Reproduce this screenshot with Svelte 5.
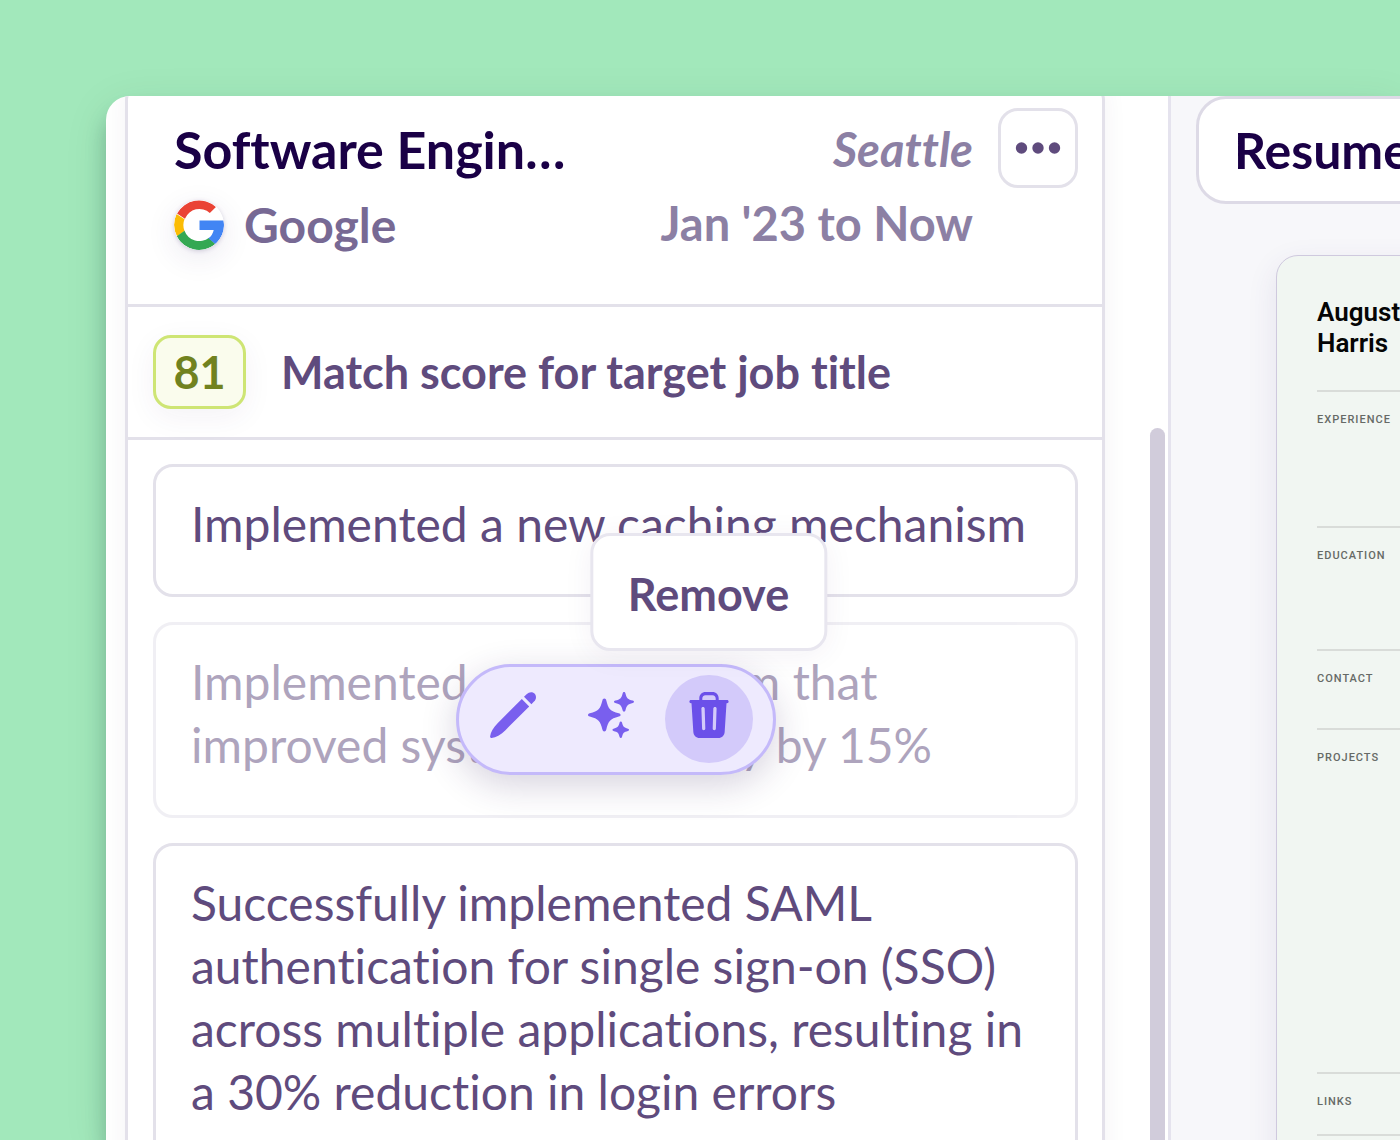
<script>
  const job = {
    title: "Software Engin…",
    company: "Google",
    location: "Seattle",
    dates: "Jan '23 to Now",
    score: 81,
  };

  const bullets = [
    { text: "Implemented a new caching mechanism" },
    {
      text: "Implemented new algorithm that improved system efficiency by 15%",
      selected: true,
    },
    {
      text: "Successfully implemented SAML authentication for single sign-on (SSO) across multiple applications, resulting in a 30% reduction in login errors",
    },
  ];

  const sections = [
    { name: "Experience", height: 136 },
    { name: "Education", height: 123 },
    { name: "Contact", height: 79 },
    { name: "Projects", height: 344 },
    { name: "Links", height: 64 },
  ];
</script>

<div class="page">
  <main class="window">
    <section class="editor">
      <article class="job">
        <header class="job-header">
          <div class="role">
            <h1>{job.title}</h1>
            <div class="company">
              <svg class="logo" viewBox="-24.5 -24.5 49 49" aria-hidden="true">
                <circle r="24.5" fill="#fff" />
                <path
                  fill="#ea4335"
                  d="M-21.5-11.2A24.5 24.5 0 0 1 16.6-17.6L10.6-11.8A15.3 15.3 0 0 0-13.8-6.2Z" />
                <path
                  fill="#fbbc05"
                  d="M-22-10.8A24.5 24.5 0 0 0-21.5 11L-14.2 5.8A15.3 15.3 0 0 1-14.2-5.6Z" />
                <path
                  fill="#34a853"
                  d="M-21.8 11A24.5 24.5 0 0 0 16 18.6L9.8 12.4A15.3 15.3 0 0 1-14.2 5.6Z" />
                <path
                  fill="#4285f4"
                  d="M.5-4.5H24.1A24.5 24.5 0 0 1 16 18.6L9.2 13A13 13 0 0 0 14.4 4.8H.5Z" />
              </svg>
              <span>{job.company}</span>
            </div>
          </div>
          <div class="meta">
            <em>{job.location}</em>
            <span>{job.dates}</span>
          </div>
          <button class="more" aria-label="More options">
            <svg width="46" height="12" viewBox="0 0 46 12">
              <circle cx="6.5" cy="6" r="5.7" />
              <circle cx="23" cy="6" r="5.7" />
              <circle cx="39.5" cy="6" r="5.7" />
            </svg>
          </button>
        </header>

        <div class="score">
          <span class="badge">{job.score}</span>
          <span>Match score for target job title</span>
        </div>

        <ul class="bullets">
          {#each bullets as bullet}
            <li>
              <p class="bullet" class:faded={bullet.selected}>{bullet.text}</p>
              {#if bullet.selected}
                <div class="toolbar">
                  <button class="tool" aria-label="Edit">
                    <svg width="46" height="46" viewBox="0 0 46 46">
                      <path
                        d="M31.8 7L39.2 14.4L15.2 38.4C10.6 43 6 45.4 1.6 46C.5 46.1 0 45.5.1 44.6C.7 40 3 35.8 7.6 31.2Z" />
                      <path
                        d="M34 4.8L36.6 2.2C39.2-.4 42.4-.5 44.5 1.6C46.6 3.7 46.5 7 44 9.6L41.4 12.2Z" />
                    </svg>
                  </button>
                  <button class="tool" aria-label="Rewrite">
                    <svg width="46" height="46" viewBox="0 0 46 46">
                      <path
                        d="M16.3 6.5C17.4 6.5 18 7.2 18.3 8.4C20.4 16.8 22 18.9 30.8 21.3C32 21.6 32.6 22.2 32.6 23C32.6 23.8 32 24.3 30.8 24.6C22 27 20.4 29.1 18.3 37.5C18 38.7 17.4 39.4 16.3 39.4C15.2 39.4 14.7 38.7 14.4 37.5C12.3 29.1 10.6 27 1.8 24.6C.6 24.3 0 23.8 0 23C0 22.2.6 21.6 1.8 21.3C10.6 18.9 12.3 16.8 14.4 8.4C14.7 7.2 15.2 6.5 16.3 6.5Z" />
                      <path
                        d="M36 0C36.7 0 37.2.5 37.4 1.2C38.7 6.3 39.8 7.4 44.8 8.6C45.6 8.8 46 9.2 46 9.8C46 10.4 45.6 10.8 44.8 11C39.8 12.2 38.7 13.4 37.4 18.4C37.2 19.2 36.7 19.6 36 19.6C35.4 19.6 34.9 19.2 34.7 18.4C33.4 13.4 32.3 12.2 27.3 11C26.5 10.8 26 10.4 26 9.8C26 9.2 26.5 8.8 27.3 8.6C32.3 7.4 33.4 6.3 34.7 1.2C34.9.5 35.4 0 36 0Z" />
                      <path
                        d="M32.8 29.5C33.4 29.5 33.8 29.9 34 30.5C35 34.7 35.9 35.6 40 36.7C40.7 36.9 41.1 37.2 41.1 37.8C41.1 38.4 40.7 38.7 40 38.9C35.9 39.9 35 40.8 34 45C33.8 45.6 33.4 46 32.8 46C32.2 46 31.8 45.6 31.6 45C30.6 40.8 29.7 39.9 25.5 38.9C24.8 38.7 24.4 38.4 24.4 37.8C24.4 37.2 24.8 36.9 25.5 36.7C29.7 35.6 30.6 34.7 31.6 30.5C31.8 29.9 32.2 29.5 32.8 29.5Z" />
                    </svg>
                  </button>
                  <button class="tool active" aria-describedby="remove-tip" aria-label="Remove">
                    <svg width="46" height="46" viewBox="0 0 46 46">
                      <path
                        fill-rule="evenodd"
                        d="M13.3 8V6.2C13.3 2.7 16 0 19.5 0H26.5C30 0 32.7 2.7 32.7 6.2V8H41C42 8 42.6 8.6 42.6 9.6C42.6 10.5 42 11.2 41 11.2H40.5L38.7 39.5C38.5 43.4 36.1 46 32.2 46H13.8C9.9 46 7.5 43.4 7.3 39.5L5.5 11.2H5C4 11.2 3.4 10.5 3.4 9.6C3.4 8.6 4 8 5 8ZM16.3 8H29.7V6.4C29.7 4.5 28.5 3.2 26.5 3.2H19.5C17.5 3.2 16.3 4.5 16.3 6.4ZM17 15C16 15 15.3 15.7 15.4 16.7L16.1 36.5C16.1 37.5 16.8 38.2 17.7 38.2C18.7 38.2 19.3 37.5 19.3 36.5L18.7 16.7C18.7 15.7 18 15 17 15ZM29 15C28 15 27.3 15.7 27.3 16.7L26.7 36.5C26.7 37.5 27.3 38.2 28.3 38.2C29.2 38.2 29.9 37.5 29.9 36.5L30.6 16.7C30.7 15.7 30 15 29 15Z" />
                    </svg>
                    <span class="tooltip" id="remove-tip" role="tooltip">Remove</span>
                  </button>
                </div>
              {/if}
            </li>
          {/each}
        </ul>
      </article>
      <div class="scrollbar"></div>
    </section>

    <aside class="preview">
      <button class="template">Resume</button>
      <div class="paper">
        <h2>August Harris</h2>
        {#each sections as section}
          <section class="block" style="height: {section.height}px">
            <h3>{section.name}</h3>
          </section>
        {/each}
      </div>
    </aside>
  </main>
</div>

<style>
  :global(body) {
    margin: 0;
    background: #a2e8bb;
  }
  .page {
    --ink: #5f4b7d;
    --title: #1a0046;
    --line: #e3e1ea;
    box-sizing: border-box;
    height: 100vh;
    padding: 96px 0 0 106px;
    overflow: hidden;
    font-family: Lato, sans-serif;
    font-variant-ligatures: none;
    color: var(--ink);
  }
  h1,
  h2,
  h3,
  p,
  ul {
    margin: 0;
    padding: 0;
  }
  button {
    box-sizing: border-box;
    padding: 0;
    font: inherit;
    color: inherit;
    cursor: pointer;
  }
  .window {
    display: grid;
    grid-template-columns: minmax(0, 1062fr) minmax(0, 232fr);
    height: 100%;
    border-radius: 24px 0 0 0;
    background: #fff;
    box-shadow: 0 18px 20px rgba(20, 60, 50, 0.26), 0 10px 44px rgba(20, 60, 50, 0.1);
  }
  .editor {
    display: flex;
    min-height: 0;
    padding: 0 3px 0 19px;
    overflow: hidden;
    border-radius: 24px 0 0 0;
  }
  .job {
    flex: 1;
    align-self: flex-start;
    min-width: 0;
    margin: -12px 45px 0 0;
    border: 3px solid var(--line);
    border-radius: 16px;
    background: #fff;
    box-shadow: 0 0 24px rgba(60, 50, 90, 0.06);
  }
  .job-header {
    display: flex;
    height: 196px;
    padding: 21px 24px 0 46px;
    border-bottom: 3px solid var(--line);
  }
  .role {
    flex: 1;
    padding-top: 4px;
  }
  h1 {
    font-size: 52px;
    font-weight: 700;
    line-height: 75px;
    color: var(--title);
    white-space: nowrap;
  }
  .company {
    display: flex;
    align-items: center;
    gap: 20px;
    font-size: 48px;
    font-weight: 700;
    line-height: 75px;
    color: #776994;
  }
  .logo {
    width: 50px;
    height: 50px;
    border-radius: 50%;
    box-shadow: 0 8px 30px rgba(60, 40, 110, 0.1), 0 1px 4px rgba(60, 40, 110, 0.2);
  }
  .meta {
    display: flex;
    flex-direction: column;
    align-items: flex-end;
    padding: 4px 25px 0 0;
    font-size: 47px;
    font-weight: 700;
    line-height: 74px;
    color: #8c80a4;
  }
  .more {
    display: flex;
    align-items: center;
    justify-content: center;
    width: 80px;
    height: 80px;
    border: 3px solid var(--line);
    border-radius: 20px;
    background: #fff;
    fill: var(--ink);
  }
  .score {
    display: flex;
    align-items: center;
    gap: 35px;
    height: 130px;
    padding: 0 25px;
    border-bottom: 3px solid var(--line);
    font-size: 45px;
    font-weight: 700;
  }
  .badge {
    box-sizing: border-box;
    width: 93px;
    height: 74px;
    border: 3px solid #cee574;
    border-radius: 18px;
    background: #fafced;
    box-shadow: 0 8px 30px rgba(60, 40, 110, 0.06);
    line-height: 68px;
    text-align: center;
    color: #71821f;
  }
  .bullets {
    display: flex;
    flex-direction: column;
    gap: 25px;
    padding: 24px 24px 24px 25px;
    list-style: none;
  }
  li {
    position: relative;
  }
  .bullet {
    padding: 25px 35px 39px;
    border: 3px solid var(--line);
    border-radius: 20px;
    font-size: 48px;
    line-height: 63px;
  }
  .faded {
    opacity: 0.5;
  }
  .toolbar {
    position: absolute;
    top: 42px;
    left: 50%;
    z-index: 1;
    display: flex;
    gap: 10px;
    padding: 8px 20px 9px 10px;
    border: 3px solid #c4b9fa;
    border-radius: 56px;
    background: #eeeafe;
    box-shadow: 0 10px 36px rgba(50, 30, 90, 0.2);
    transform: translateX(-50%);
  }
  .tool {
    position: relative;
    display: flex;
    align-items: center;
    justify-content: center;
    width: 88px;
    height: 88px;
    padding-bottom: 8px;
    border: 0;
    border-radius: 50%;
    background: none;
    fill: #795fee;
  }
  .tool.active {
    background: #d3cafa;
    fill: #6b50e9;
  }
  .tooltip {
    position: absolute;
    bottom: calc(100% + 24px);
    left: 50%;
    padding: 30px 35px 26px;
    border: 3px solid #e8e6ef;
    border-radius: 20px;
    background: #fff;
    box-shadow: 0 4px 30px rgba(60, 40, 110, 0.06);
    font-size: 45px;
    font-weight: 700;
    line-height: 56px;
    transform: translateX(-50%);
  }
  .scrollbar {
    width: 15px;
    margin-top: 332px;
    border-radius: 8px 8px 0 0;
    background: #d1ccdb;
  }
  .preview {
    min-width: 0;
    min-height: 0;
    padding-left: 25px;
    overflow: hidden;
    border-left: 3px solid #e5e3ee;
    background: #f7f7fa;
  }
  .template {
    display: block;
    width: 400px;
    height: 108px;
    padding-left: 35px;
    border: 3px solid #dddae6;
    border-radius: 30px;
    background: #fff;
    font-size: 50px;
    font-weight: 700;
    text-align: left;
    color: var(--title);
  }
  .paper {
    width: 720px;
    margin: 51px 0 0 80px;
    padding: 41px 40px;
    border: 1px solid #cfc9de;
    border-radius: 22px;
    background: #f1f6f2;
    box-shadow: 0 10px 30px rgba(70, 50, 130, 0.1);
    font-family: Roboto, sans-serif;
  }
  h2 {
    width: 120px;
    margin-bottom: 31px;
    font-size: 26px;
    font-weight: 600;
    line-height: 31px;
    color: #050505;
  }
  .block {
    box-sizing: border-box;
    padding-top: 20px;
    border-top: 2px solid #d9dcd9;
  }
  .block:last-child {
    border-bottom: 2px solid #d9dcd9;
  }
  h3 {
    font-size: 11px;
    font-weight: 500;
    line-height: 16px;
    letter-spacing: 1px;
    text-transform: uppercase;
    color: #666a66;
  }
</style>
